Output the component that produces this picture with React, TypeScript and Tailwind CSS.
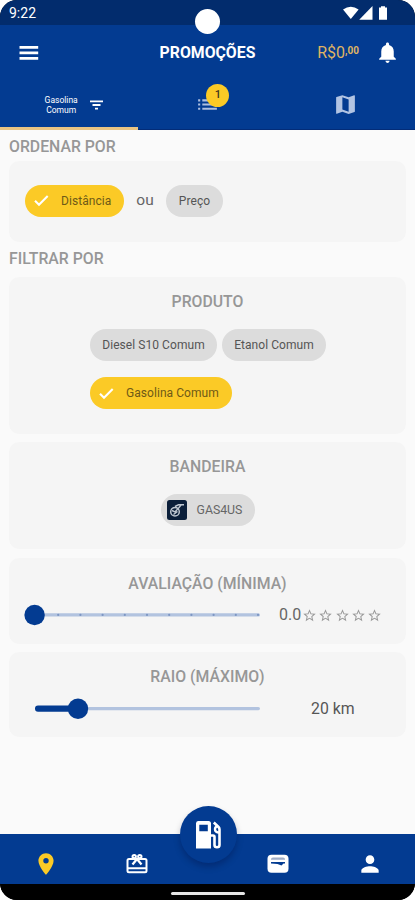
import React from 'react';
import { MdList, MdLocationOn, MdMap, MdNotifications, MdPerson, MdStarBorder } from 'react-icons/md';

type ChipProps = {
  label: string;
  selected?: boolean;
  className: string;
};

const Chip: React.FC<ChipProps> = ({ label, selected, className }) => (
  <button
    className={`flex h-8 shrink-0 items-center rounded-full text-[12px] tracking-[0.06px] whitespace-nowrap ${
      selected ? 'bg-[#fbca26] pl-[7px] text-[#6f5a17]' : 'justify-center bg-[#dcdcdc] text-[#555555]'
    } ${className}`}
  >
    {selected && (
      <svg className="mr-[10px] size-[19px]" viewBox="0 0 19 19" fill="none" stroke="white" strokeWidth="2.1">
        <path d="M3 9.8 7 13.8 15.7 5" />
      </svg>
    )}
    {label}
  </button>
);

const CardTitle: React.FC<{ children: React.ReactNode }> = ({ children }) => (
  <h3 className="text-center text-[15.8px] leading-5 font-medium text-[#979797]">{children}</h3>
);

const StatusBar: React.FC = () => (
  <div className="relative flex h-[25px] items-center justify-between bg-[#022c6d] pt-px pr-[26px] pl-[9px] text-white">
    <span className="text-[14px]">9:22</span>
    <div className="absolute top-[9px] left-[195px] z-10 size-[25px] rounded-full bg-white" />
    <svg width="46" height="15" viewBox="0 0 46 15" fill="currentColor">
      <path d="M0 3.5Q7.8-1.8 15.6 3.5L7.8 13Z" />
      <path d="M29.5 0V13.8H16.2Z" />
      <path d="M38 1.4V.3H42V1.4H44V13.8H36V1.4Z" />
    </svg>
  </div>
);

const Header: React.FC = () => (
  <header className="bg-[#033b91] text-white">
    <div className="grid h-[55px] grid-cols-3 items-center">
      <svg className="ml-[19px]" width="20" height="15" viewBox="0 0 20 15" stroke="currentColor" strokeWidth="2.7">
        <path d="M.5 2.3H19.2M.5 7.8H19.2M.5 13.3H19.2" />
      </svg>
      <h1 className="text-center text-[15.8px] font-bold">PROMOÇÕES</h1>
      <div className="flex items-center justify-end pr-[15px]">
        <span className="flex items-start text-[16px] leading-5 text-[#dfb364]">
          R$0<span className="text-[10px] leading-[16px] font-bold">,00</span>
        </span>
        <MdNotifications className="ml-[16px] size-[25px]" />
      </div>
    </div>
    <nav className="grid h-[50px] grid-cols-3">
      <button className="flex items-center justify-center gap-[11px] border-b-[3px] border-[#e9c483] pt-[2px] pl-2">
        <span className="w-[36px] text-center text-[8.5px] leading-[10px]">Gasolina Comum</span>
        <svg width="13" height="10" viewBox="0 0 13 10" stroke="currentColor" strokeWidth="1.8">
          <path d="M0 1.3H13M2.5 5H10.5M5 8.7H8" />
        </svg>
      </button>
      <button className="relative flex items-center justify-center border-b border-[#032c78] text-[#aebfe0]">
        <MdList className="size-[25px]" />
        <span className="absolute top-[4px] left-[68px] flex size-[23px] items-center justify-center rounded-full bg-[#fbca26] text-[11px] font-medium text-[#3b3420]">
          1
        </span>
      </button>
      <button className="flex items-center justify-center border-b border-[#032c78] text-[#b2c4e3]">
        <MdMap className="size-[25px]" />
      </button>
    </nav>
  </header>
);

const RatingSlider: React.FC = () => (
  <svg className="shrink-0" width="236" height="22" viewBox="0 0 236 22">
    <rect x="10" y="9.3" width="226" height="3.2" rx="1.6" fill="#b2c3df" />
    {[1, 2, 3, 4, 5, 6, 7, 8, 9, 10].map((n) => (
      <circle key={n} cx={12 + n * 22.2} cy="10.9" r="1.1" fill="#7d96c3" />
    ))}
    <circle cx="10.6" cy="11" r="10.2" fill="#033b91" />
  </svg>
);

const RadiusSlider: React.FC = () => (
  <svg className="shrink-0" width="236" height="22" viewBox="0 0 236 22">
    <rect x="50" y="9" width="186" height="3.2" rx="1.6" fill="#b2c3df" />
    <rect x="11" y="7.5" width="45" height="6.2" rx="3" fill="#033b91" />
    <circle cx="54" cy="10.7" r="10.2" fill="#033b91" />
  </svg>
);

const BottomNav: React.FC = () => (
  <nav className="relative flex h-[50px] shrink-0 items-center bg-[#033b91] pt-[9px] pl-[33px] text-white">
    <MdLocationOn className="size-[26px] shrink-0 text-[#fbca26]" />
    <svg className="ml-[67px]" width="22" height="21" viewBox="0 0 22 21" fill="none" stroke="currentColor" strokeWidth="2">
      <rect x="1.5" y="6" width="19" height="13.3" rx="1.5" />
      <path d="M2 15.3H20" />
      <path d="M11 6 6.5 11.5M11 6 15.5 11.5" strokeWidth="2.3" />
      <circle cx="8.2" cy="3.6" r="1.7" />
      <circle cx="13.8" cy="3.6" r="1.7" />
    </svg>
    <svg className="ml-[119px]" width="22" height="20" viewBox="0 0 22 20">
      <rect x=".5" y=".8" width="21" height="18" rx="4" fill="currentColor" />
      <path d="M4 5.8V5.2Q4 3.5 6 3.5H16Q18 3.5 18 5.2V5.8Z" fill="#9eacc6" />
      <path d="M4 8H18V9.6H16.5L14.5 11.5 10.5 10 4 9.6Z" fill="#033b91" />
    </svg>
    <MdPerson className="ml-[68px] size-[26px] shrink-0" />
    <button className="absolute -top-7 left-[180px] flex size-[57px] items-center justify-center rounded-full bg-[#033b91] shadow-[0_4px_6px_rgba(0,0,40,0.25)]">
      <svg width="28" height="30" viewBox="0 0 28 30" fill="none" stroke="currentColor">
        <path
          d="M3 1H13.5Q16 1 16 3.5V28.5H1V3.5Q1 1 3 1ZM4.3 4.7V11.3H12.8V4.7Z"
          fill="currentColor"
          fillRule="evenodd"
          stroke="none"
        />
        <path d="M16 15.5H18Q19.5 15.5 19.5 17V25Q19.5 27.3 22 27.3T24.5 25V9.5Q24.5 8 23.5 7L18.8 2.5" strokeWidth="2.6" />
        <path d="M24.5 12.5Q20 12.5 20 9.3 20 7 22.5 6.2" strokeWidth="2.4" />
      </svg>
    </button>
  </nav>
);

const App: React.FC = () => (
  <div className="h-[900px] w-[415px] bg-white font-['Roboto',sans-serif]">
    <div className="flex h-full flex-col overflow-hidden rounded-[17px] bg-black">
      <StatusBar />
      <Header />
      <main className="flex flex-1 flex-col bg-[#fafafa] px-[9px] pt-[7px]">
        <h2 className="text-[15.8px] leading-5 font-medium text-[#979797]">ORDENAR POR</h2>
        <section className="mt-1 flex h-[81px] items-center rounded-[10px] bg-[#f5f5f5] pb-[2px] pl-4">
          <Chip label="Distância" selected className="w-[99px]" />
          <span className="w-[42px] text-center text-[15.5px] text-[#666666]">ou</span>
          <Chip label="Preço" className="w-[57px]" />
        </section>
        <h2 className="mt-[7px] text-[15.8px] leading-5 font-medium text-[#979797]">FILTRAR POR</h2>
        <section className="mt-2 h-[157px] rounded-[10px] bg-[#f5f5f5] pt-[15px]">
          <CardTitle>PRODUTO</CardTitle>
          <div className="mt-[17px] ml-[81px] flex flex-wrap gap-x-[5px] gap-y-4">
            <Chip label="Diesel S10 Comum" className="w-[127px]" />
            <Chip label="Etanol Comum" className="w-[104px]" />
            <Chip label="Gasolina Comum" selected className="w-[142px]" />
          </div>
        </section>
        <section className="mt-2 flex h-[107px] flex-col items-center rounded-[10px] bg-[#f5f5f5] pt-[15px]">
          <CardTitle>BANDEIRA</CardTitle>
          <button className="mt-[17px] flex h-8 w-[94px] items-center rounded-full bg-[#dcdcdc] pl-[6px] text-[12.3px] text-[#666666]">
            <svg className="mr-[10px]" width="20" height="20" viewBox="0 0 20 20" fill="none" stroke="#bfc7d1">
              <rect width="20" height="20" rx="2.5" fill="#0b1f3a" stroke="none" />
              <circle cx="8" cy="11.8" r="4.3" strokeWidth="1.5" />
              <path d="M5 10.5 8 12 12 7.5M6.5 14.5 10.5 11.5M8 6.5 11.5 4.8H17M12 7.5 14 5" strokeWidth="1.4" />
            </svg>
            GAS4US
          </button>
        </section>
        <section className="mt-[9px] h-[86px] rounded-[10px] bg-[#f5f5f5] pt-4">
          <CardTitle>AVALIAÇÃO (MÍNIMA)</CardTitle>
          <div className="mt-[10px] flex items-center pl-[15px]">
            <RatingSlider />
            <span className="ml-[19px] text-base leading-[22px] text-[#666666]">0.0</span>
            <div className="ml-px flex gap-[1.2px] text-[#999999]">
              {[1, 2, 3, 4, 5].map((star) => (
                <MdStarBorder key={star} className="size-[15px]" />
              ))}
            </div>
          </div>
        </section>
        <section className="mt-2 h-[85px] rounded-[10px] bg-[#f5f5f5] pt-[15px]">
          <CardTitle>RAIO (MÁXIMO)</CardTitle>
          <div className="mt-[11px] flex items-center pl-[15px]">
            <RadiusSlider />
            <span className="ml-[51px] text-[15.8px] leading-[22px] text-[#555555]">20 km</span>
          </div>
        </section>
      </main>
      <BottomNav />
      <div className="flex h-4 shrink-0 justify-center bg-black pt-2">
        <div className="h-[3px] w-[74px] rounded-sm bg-[#e5e5e5]" />
      </div>
    </div>
  </div>
);

export default App;
